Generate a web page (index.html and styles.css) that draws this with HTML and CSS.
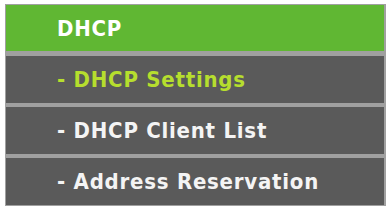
FILE: index.html
```html
<!DOCTYPE html>
<html lang="en">
<head>
    <meta charset="UTF-8">
    <title>DHCP Menu</title>
    <link rel="stylesheet" href="styles.css">
</head>
<body>
    <div class="menu">
        <div class="menu-header">DHCP</div>
        <div class="menu-item active">- DHCP Settings</div>
        <div class="menu-item">- DHCP Client List</div>
        <div class="menu-item">- Address Reservation</div>
    </div>
</body>
</html>
```

FILE: styles.css
```css
* {
    margin: 0;
    padding: 0;
    box-sizing: border-box;
}

body {
    background: white;
    font-family: 'DejaVu Sans Condensed', 'DejaVu Sans', Verdana, sans-serif;
    font-stretch: condensed;
    font-weight: bold;
    font-size: 22px;
    letter-spacing: 0.75px;
}

.menu {
    margin: 4px 0 0 5px;
    width: 381px;
    border-top: 1px solid #a0a0a0;
    border-left: 1px solid #a0a0a0;
    border-right: 2px solid #a0a0a0;
    display: flex;
    flex-direction: column;
}

.menu-header {
    height: 51px;
    background: #60b733;
    border-bottom: 5px solid #a0a0a0;
    color: white;
    display: flex;
    align-items: center;
    padding-left: 51px;
}

.menu-item {
    height: 51px;
    background: #5a5a5a;
    border-bottom: 4px solid #a0a0a0;
    color: #f4f4f4;
    display: flex;
    align-items: center;
    padding-left: 51px;
}

.menu-item.active {
    color: #b6de2e;
}
```
